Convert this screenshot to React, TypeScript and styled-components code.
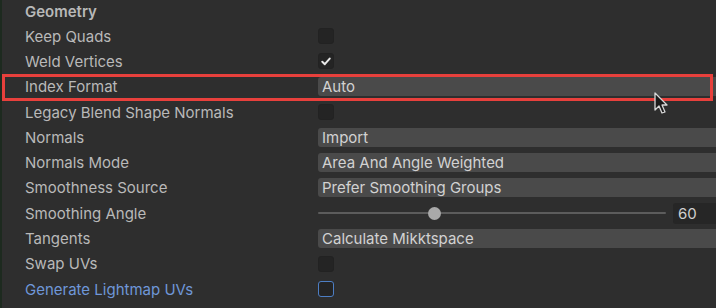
import styled, { createGlobalStyle } from 'styled-components';

const GlobalStyle = createGlobalStyle`
  html, body {
    margin: 0;
    padding: 0;
    background: #2e2e2e;
    overflow: hidden;
  }
  body {
    font-family: Inter, "Liberation Sans", Arial, sans-serif;
    -webkit-font-smoothing: antialiased;
  }
`;

const Panel = styled.div`
  position: relative;
  width: 740px;
  height: 308px;
  background: #2e2e2e;
  border-left: 2px solid #1d2a1f;
  box-sizing: border-box;
  overflow: hidden;
`;

const Header = styled.div`
  height: 23.5px;
  display: flex;
  align-items: center;
  padding-left: 23px;
  font-size: 15px;
  font-weight: 600;
  color: #b8b8b8;
`;

const Row = styled.div`
  position: relative;
  height: 25.3px;
  display: grid;
  grid-template-columns: 293px 1fr;
  align-items: center;
  padding-left: 23px;
`;

const Label = styled.span<{ $accent?: boolean }>`
  font-size: 15px;
  color: ${({ $accent }) => ($accent ? '#6f97d8' : '#b9b9b9')};
  white-space: nowrap;
`;

const Dropdown = styled.div`
  height: 19px;
  display: flex;
  align-items: center;
  padding-left: 4px;
  border-radius: 3px;
  background: #4a4a4a;
  font-size: 15px;
  color: #d2d2d2;
  white-space: nowrap;
`;

const Checkbox = styled.div<{ $focus?: boolean }>`
  width: 16px;
  height: 16px;
  box-sizing: border-box;
  border-radius: 3px;
  background: #242424;
  border: ${({ $focus }) => ($focus ? '1.5px solid #4d7ec4' : '1px solid #222')};
  display: flex;
  align-items: center;
  justify-content: center;
`;

const SliderBox = styled.div`
  display: flex;
  align-items: center;
  gap: 7px;
`;

const Track = styled.div`
  position: relative;
  flex: 1;
  height: 2px;
  background: #5c5c5c;
  border-radius: 1px;
`;

const Thumb = styled.div`
  position: absolute;
  top: 50%;
  width: 13px;
  height: 13px;
  margin: -6.5px 0 0 -6.5px;
  border-radius: 50%;
  background: #a9a9a9;
`;

const NumberField = styled.div`
  width: 67px;
  height: 21px;
  display: flex;
  align-items: center;
  padding-left: 5px;
  box-sizing: border-box;
  border-radius: 3px;
  background: #262626;
  font-size: 15px;
  color: #cfcfcf;
`;

const Marker = styled.div`
  position: absolute;
  top: -0.5px;
  bottom: -1.5px;
  left: 0;
  width: 711px;
  border: 3px solid #e8403c;
  box-sizing: border-box;
  pointer-events: none;
`;

const Cursor = styled.svg`
  position: absolute;
  left: 652px;
  top: 92px;
`;

const Check = () => (
  <svg width="10" height="9" viewBox="0 0 10 9">
    <path d="M1.3 4.8 L3.8 7.2 L8.7 1.6" fill="none" stroke="#e8e8e8" strokeWidth="2" strokeLinecap="round" strokeLinejoin="round" />
  </svg>
);

type Field =
  | { kind: 'check'; checked?: boolean; focus?: boolean }
  | { kind: 'dropdown'; value: string }
  | { kind: 'slider'; value: number; min: number; max: number };

interface Setting {
  label: string;
  field: Field;
  highlight?: boolean;
  accent?: boolean;
}

const settings: Setting[] = [
  { label: 'Keep Quads', field: { kind: 'check' } },
  { label: 'Weld Vertices', field: { kind: 'check', checked: true } },
  { label: 'Index Format', field: { kind: 'dropdown', value: 'Auto' }, highlight: true },
  { label: 'Legacy Blend Shape Normals', field: { kind: 'check' } },
  { label: 'Normals', field: { kind: 'dropdown', value: 'Import' } },
  { label: 'Normals Mode', field: { kind: 'dropdown', value: 'Area And Angle Weighted' } },
  { label: 'Smoothness Source', field: { kind: 'dropdown', value: 'Prefer Smoothing Groups' } },
  { label: 'Smoothing Angle', field: { kind: 'slider', value: 60, min: 0, max: 180 } },
  { label: 'Tangents', field: { kind: 'dropdown', value: 'Calculate Mikktspace' } },
  { label: 'Swap UVs', field: { kind: 'check' } },
  { label: 'Generate Lightmap UVs', field: { kind: 'check', focus: true }, accent: true },
];

const renderField = (field: Field) => {
  switch (field.kind) {
    case 'check':
      return <Checkbox $focus={field.focus}>{field.checked && <Check />}</Checkbox>;
    case 'dropdown':
      return <Dropdown>{field.value}</Dropdown>;
    case 'slider': {
      const pct = ((field.value - field.min) / (field.max - field.min)) * 100;
      return (
        <SliderBox>
          <Track>
            <Thumb style={{ left: `${pct}%` }} />
          </Track>
          <NumberField>{field.value}</NumberField>
        </SliderBox>
      );
    }
  }
};

export default function App() {
  return (
    <>
      <GlobalStyle />
      <Panel>
        <Header>Geometry</Header>
        {settings.map((s) => (
          <Row key={s.label}>
            <Label $accent={s.accent}>{s.label}</Label>
            {renderField(s.field)}
            {s.highlight && <Marker />}
          </Row>
        ))}
        <Cursor width="16" height="24" viewBox="0 0 16 24">
          <path d="M1 1 L1 18 L5 14 L8 21 L11 20 L8 13 L13 13 Z" fill="#1a1a1a" stroke="#d8d8d8" strokeWidth="1.3" strokeLinejoin="round" />
        </Cursor>
      </Panel>
    </>
  );
}
